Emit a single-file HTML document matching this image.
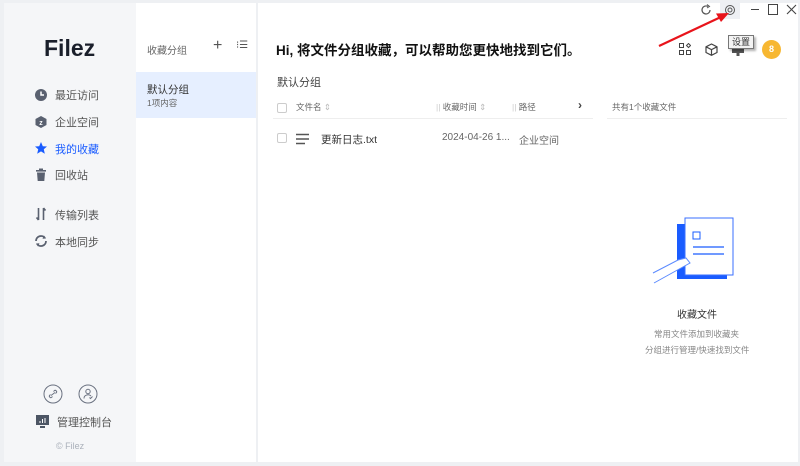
<!DOCTYPE html>
<html><head><meta charset="utf-8"><style>
*{margin:0;padding:0;box-sizing:border-box}
body{width:800px;height:466px;background:#eef0f3;font-family:"Liberation Sans","Noto Sans CJK SC",sans-serif;position:relative;overflow:hidden;color:#333}
.a{position:absolute}
#side{left:4px;top:3px;width:132px;height:459px;background:#f5f6f8}
#grp{left:136px;top:3px;width:120px;height:459px;background:#fff}
#main{left:258px;top:3px;width:540px;height:459px;background:#fff}
.nav{font-size:11px;color:#555}
</style></head><body>
<div id="side" class="a"></div>
<div id="grp" class="a"></div>
<div id="main" class="a"></div>

<div class="a" style="left:44px;top:35px;font-size:23px;font-weight:bold;color:#1a1f2b">Filez</div>

<svg class="a" style="left:34px;top:88px" width="14" height="14"><circle cx="7" cy="7" r="6" fill="#5a6170"/><path d="M7 3.5V7H10" stroke="#fff" stroke-width="1.5" fill="none"/></svg>
<div class="a nav" style="left:55px;top:87px">最近访问</div>
<svg class="a" style="left:34px;top:115px" width="14" height="14"><path d="M7 1L12.5 4V10L7 13L1.5 10V4Z" fill="#5a6170"/><text x="7" y="10" font-size="7" fill="#fff" text-anchor="middle" font-family="Liberation Sans" font-weight="bold">z</text></svg>
<div class="a nav" style="left:55px;top:114px">企业空间</div>
<svg class="a" style="left:34px;top:141px" width="14" height="14"><path d="M7 1L8.8 5.2L13 5.5L9.8 8.3L10.8 12.8L7 10.4L3.2 12.8L4.2 8.3L1 5.5L5.2 5.2Z" fill="#1a5cff"/></svg>
<div class="a nav" style="left:55px;top:141px;color:#1a5cff">我的收藏</div>
<svg class="a" style="left:34px;top:168px" width="14" height="14"><rect x="2" y="2" width="10" height="1.6" fill="#5a6170"/><rect x="5" y="0.5" width="4" height="2" fill="#5a6170"/><path d="M3 4.5H11L10.3 13H3.7Z" fill="#5a6170"/></svg>
<div class="a nav" style="left:55px;top:167px">回收站</div>
<svg class="a" style="left:34px;top:207px" width="14" height="14"><path d="M4.5 1V13M2.5 10.5L4.5 13M9.5 1V13M9.5 1L11.5 3.5" stroke="#5a6170" stroke-width="1.6" fill="none"/></svg>
<div class="a nav" style="left:55px;top:207px">传输列表</div>
<svg class="a" style="left:34px;top:234px" width="14" height="14"><path d="M2 7A5 5 0 0 1 11 4M12 7A5 5 0 0 1 3 10" stroke="#5a6170" stroke-width="1.8" fill="none"/><path d="M10 1.5L12 4.5L8.5 4.8Z M4 12.5L2 9.5L5.5 9.2Z" fill="#5a6170"/></svg>
<div class="a nav" style="left:55px;top:234px">本地同步</div>

<svg class="a" style="left:43px;top:384px" width="20" height="20"><circle cx="10" cy="10" r="9" fill="none" stroke="#6a7180"/><path d="M8 11.5L12 8.5M7.5 10.5L6.8 11.2A1.4 1.4 0 0 0 8.8 13.2L9.5 12.5M10.5 7.5L11.2 6.8A1.4 1.4 0 0 1 13.2 8.8L12.5 9.5" stroke="#6a7180" fill="none"/></svg>
<svg class="a" style="left:78px;top:384px" width="20" height="20"><circle cx="10" cy="10" r="9" fill="none" stroke="#6a7180"/><circle cx="10" cy="7.5" r="2.2" fill="none" stroke="#6a7180"/><path d="M6 14.5A4 3.5 0 0 1 13 12M11.5 13.5L12.5 14.5L14.5 12.5" stroke="#6a7180" fill="none"/></svg>
<svg class="a" style="left:36px;top:415px" width="14" height="14"><rect x="0" y="0" width="13" height="10" fill="#4c5564"/><rect x="4" y="11" width="5" height="2" fill="#4c5564"/><path d="M4 8V6M6.5 8V4M9 8V3" stroke="#fff"/></svg>
<div class="a nav" style="left:57px;top:414px">管理控制台</div>
<div class="a" style="left:56px;top:441px;font-size:9px;color:#aab0ba">© Filez</div>

<div class="a" style="left:147px;top:42px;font-size:10px;color:#666">收藏分组</div>
<div class="a" style="left:213px;top:37px;font-size:16px;color:#555;font-weight:200">+</div>
<div class="a" style="left:236px;top:40px;font-size:10px;color:#555">⁝☰</div>
<div class="a" style="left:136px;top:72px;width:120px;height:46px;background:#e6efff"></div>
<div class="a" style="left:147px;top:82px;font-size:10.5px;color:#333">默认分组</div>
<div class="a" style="left:147px;top:97px;font-size:8.5px;color:#666">1项内容</div>

<div class="a" style="left:276px;top:39px;font-size:13.5px;font-weight:bold;color:#111">Hi, 将文件分组收藏，可以帮助您更快地找到它们。</div>
<div class="a" style="left:277px;top:74px;font-size:11px;color:#444">默认分组</div>

<div class="a" style="left:277px;top:103px;width:10px;height:10px;border:1px solid #ccc;border-radius:2px"></div>
<div class="a" style="left:296px;top:101px;font-size:8.5px;color:#666">文件名 <span style="color:#bbb">⇕</span></div>
<div class="a" style="left:436px;top:101px;font-size:8.5px;color:#666"><span style="color:#ccc">||</span> 收藏时间 <span style="color:#bbb">⇕</span></div>
<div class="a" style="left:512px;top:101px;font-size:8.5px;color:#666"><span style="color:#ccc">||</span> 路径</div>
<div class="a" style="left:578px;top:98px;font-size:12px;color:#444;font-weight:bold">›</div>
<div class="a" style="left:273px;top:118px;width:320px;height:1px;background:#eee"></div>
<div class="a" style="left:612px;top:101px;font-size:8.5px;color:#666">共有1个收藏文件</div>
<div class="a" style="left:607px;top:118px;width:180px;height:1px;background:#eee"></div>

<div class="a" style="left:277px;top:133px;width:10px;height:10px;border:1px solid #ccc;border-radius:2px"></div>
<svg class="a" style="left:296px;top:133px" width="14" height="12"><path d="M0 1.5H13M0 6H13M0 10.5H9" stroke="#555" stroke-width="1.5"/></svg>
<div class="a" style="left:321px;top:132px;font-size:10.5px;color:#333">更新日志.txt</div>
<div class="a" style="left:442px;top:132px;font-size:10px;color:#666">2024-04-26 1...</div>
<div class="a" style="left:519px;top:132px;font-size:10px;color:#666">企业空间</div>

<svg class="a" style="left:650px;top:215px" width="90" height="70"><rect x="27" y="9" width="50" height="55" fill="#1a5cff"/><rect x="35" y="3" width="48" height="57" fill="#fff" stroke="#3a6fff"/><rect x="43" y="17" width="7" height="7" fill="none" stroke="#1a5cff"/><path d="M43 32H74M43 39H74" stroke="#1a5cff" stroke-width="1.3"/><path d="M3 58L28 45L36 43L40 48L4 68" stroke="#5b8aff" fill="#fff"/></svg>
<div class="a" style="left:677px;top:306px;font-size:10px;color:#333">收藏文件</div>
<div class="a" style="left:654px;top:328px;font-size:8.5px;color:#888">常用文件添加到收藏夹</div>
<div class="a" style="left:645px;top:344px;font-size:8.5px;color:#888">分组进行管理/快速找到文件</div>

<div class="a" style="left:720px;top:1px;width:20px;height:18px;background:#eef0f4"></div>
<svg class="a" style="left:700px;top:4px" width="12" height="12"><path d="M10 6A4 4 0 1 1 8 2.5" stroke="#555" stroke-width="1.2" fill="none"/><path d="M7 0.5L9.5 2.5L7 4" stroke="#555" fill="none"/></svg>
<svg class="a" style="left:724px;top:4px" width="12" height="12"><circle cx="6" cy="6" r="4.5" fill="none" stroke="#555"/><circle cx="6" cy="6" r="2" fill="none" stroke="#555"/></svg>
<div class="a" style="left:751px;top:9px;width:8px;height:1.2px;background:#444"></div>
<div class="a" style="left:768px;top:4px;width:10px;height:11px;border:1.2px solid #444"></div>
<svg class="a" style="left:786px;top:4px" width="11" height="11"><path d="M1 1L10 10M10 1L1 10" stroke="#444" stroke-width="1.1"/></svg>

<svg class="a" style="left:679px;top:43px" width="12" height="12"><rect x="0.5" y="0.5" width="4" height="4" fill="none" stroke="#444"/><rect x="0.5" y="7.5" width="4" height="4" fill="none" stroke="#444"/><rect x="7.5" y="7.5" width="4" height="4" fill="none" stroke="#444"/><path d="M9.5 0.5L11.5 2.5L9.5 4.5L7.5 2.5Z" fill="none" stroke="#444"/></svg>
<svg class="a" style="left:705px;top:43px" width="13" height="13"><path d="M6.5 1L12 3.8V9.5L6.5 12.3L1 9.5V3.8Z M1 3.8L6.5 6.6L12 3.8M6.5 6.6V12.3" stroke="#444" stroke-width="1.2" fill="none" stroke-linejoin="round"/></svg>
<svg class="a" style="left:731px;top:44px" width="14" height="14"><rect x="1" y="1" width="12" height="8" fill="#555"/><rect x="5.5" y="9" width="3" height="3" fill="#555"/></svg>
<div class="a" style="left:728px;top:35px;width:26px;height:14px;background:#f3f3f3;border:1px solid #777;font-size:9px;line-height:12px;text-align:center;color:#333;box-shadow:2px 2px 2px rgba(0,0,0,.3)">设置</div>
<div class="a" style="left:762px;top:40px;width:19px;height:19px;border-radius:50%;background:#f7b731;color:#fff;font-size:9px;font-weight:bold;text-align:center;line-height:19px">8</div>

<svg class="a" style="left:655px;top:5px" width="80" height="45"><path d="M4 41L68 11" stroke="#e8141b" stroke-width="2.2"/><path d="M74 8L61 8.5L66 17Z" fill="#e8141b"/></svg>
</body></html>
